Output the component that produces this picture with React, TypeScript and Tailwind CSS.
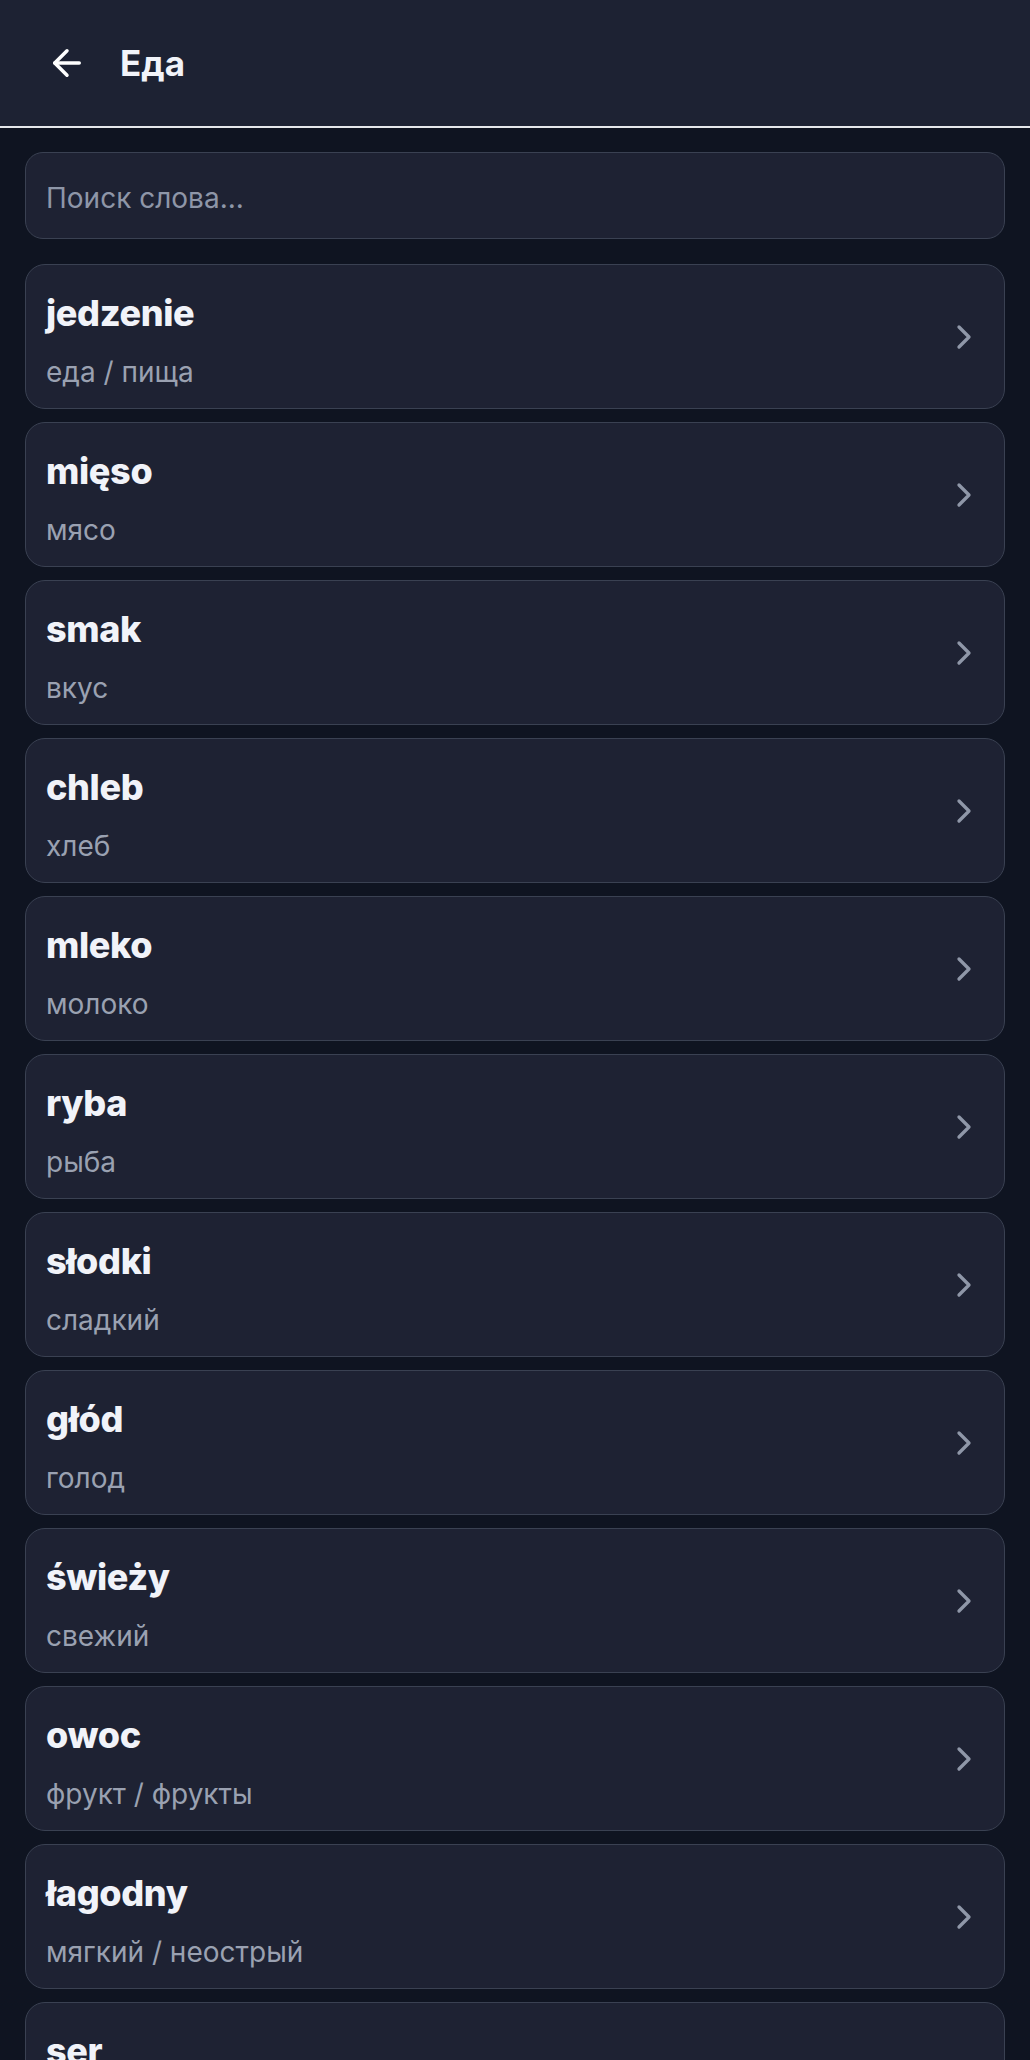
import { ArrowLeft, ChevronRight } from "lucide-react";

const words = [
  { pl: "jedzenie", ru: "еда / пища" },
  { pl: "mięso", ru: "мясо" },
  { pl: "smak", ru: "вкус" },
  { pl: "chleb", ru: "хлеб" },
  { pl: "mleko", ru: "молоко" },
  { pl: "ryba", ru: "рыба" },
  { pl: "słodki", ru: "сладкий" },
  { pl: "głód", ru: "голод" },
  { pl: "świeży", ru: "свежий" },
  { pl: "owoc", ru: "фрукт / фрукты" },
  { pl: "łagodny", ru: "мягкий / неострый" },
  { pl: "ser", ru: "сыр" },
];

export default function App() {
  return (
    <div className="min-h-screen bg-[#0f1421] font-['Inter',sans-serif]">
      <header className="h-[128px] bg-[#1d2233] border-b-2 border-[#e5e7eb] flex items-center pl-[46px] gap-[32px]">
        <ArrowLeft size={42} className="text-white" />
        <h1 className="text-[35px] font-bold text-[#f1f3f9] leading-none">Еда</h1>
      </header>

      <div className="px-[25px] pt-[24px]">
        <input
          type="text"
          placeholder="Поиск слова..."
          className="w-full h-[87px] rounded-[18px] bg-[#1e2233] border border-[#3a4152] px-[20px] pt-[5px] text-[28px] text-white placeholder:text-[#8e96a8] outline-none"
        />

        <div className="mt-[25px] flex flex-col gap-[13px]">
          {words.map((w) => (
            <div
              key={w.pl}
              className="h-[145px] rounded-[20px] bg-[#1e2233] border border-[#3a4152] flex items-center justify-between pl-[20px] pr-[20px]"
            >
              <div className="flex flex-col gap-[19px] pt-[8px]">
                <span className="text-[36px] leading-[44px] font-extrabold text-[#f1f3f9] tracking-[-0.01em]">
                  {w.pl}
                </span>
                <span className="text-[28px] leading-[36px] text-[#9aa1b1]">{w.ru}</span>
              </div>
              <ChevronRight size={40} className="text-[#8f97a8]" />
            </div>
          ))}
        </div>
      </div>
    </div>
  );
}
